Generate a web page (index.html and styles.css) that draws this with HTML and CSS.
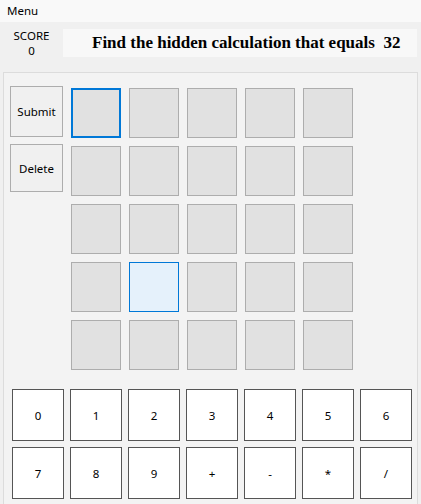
FILE: index.html
```html
<!DOCTYPE html>
<html>
<head>
<meta charset="utf-8">
<link rel="stylesheet" href="styles.css">
</head>
<body>
<div class="menubar"><span class="menu-item">Menu</span></div>
<div class="header">
  <div class="score">
    <div class="score-label">SCORE</div>
    <div class="score-value">0</div>
  </div>
  <div class="title">Find the hidden calculation that equals&nbsp; 32</div>
</div>
<div class="panel">
  <div class="board">
    <div class="side">
      <button class="side-btn submit">Submit</button>
      <button class="side-btn delete">Delete</button>
    </div>
    <div class="grid">
      <div class="cell selected"></div><div class="cell"></div><div class="cell"></div><div class="cell"></div><div class="cell"></div>
      <div class="cell"></div><div class="cell"></div><div class="cell"></div><div class="cell"></div><div class="cell"></div>
      <div class="cell"></div><div class="cell"></div><div class="cell"></div><div class="cell"></div><div class="cell"></div>
      <div class="cell"></div><div class="cell hover"></div><div class="cell"></div><div class="cell"></div><div class="cell"></div>
      <div class="cell"></div><div class="cell"></div><div class="cell"></div><div class="cell"></div><div class="cell"></div>
    </div>
  </div>
  <div class="keypad">
    <button class="key">0</button><button class="key">1</button><button class="key">2</button><button class="key">3</button><button class="key">4</button><button class="key">5</button><button class="key">6</button>
    <button class="key">7</button><button class="key">8</button><button class="key">9</button><button class="key">+</button><button class="key">-</button><button class="key">*</button><button class="key">/</button>
  </div>
</div>
</body>
</html>
```
FILE: styles.css
```css
* { box-sizing: border-box; }
html, body { height: 100%; }
body {
  margin: 0;
  background: #f0f0f0;
  font-family: "Noto Sans", "Open Sans", sans-serif;
  font-size: 11.5px;
  color: #000;
  overflow: hidden;
  display: flex;
  flex-direction: column;
}
.menubar {
  flex: none;
  height: 22px;
  background: #f9f9f9;
  padding-left: 7px;
  line-height: 22px;
}
.header {
  flex: none;
  display: flex;
  margin-top: 7px;
  height: 28px;
  padding-right: 4px;
}
.score {
  width: 63px;
  text-align: center;
  font-size: 11.5px;
  line-height: 15px;
  margin-top: -1px;
}
.score-label, .score-value { height: 15px; line-height: 15px; }
.title {
  flex: 1;
  background: #f8f8f8;
  padding-left: 29px;
  font-family: "Liberation Serif", serif;
  font-weight: bold;
  font-size: 17px;
  line-height: 28px;
  white-space: nowrap;
}
.panel {
  flex: 1;
  margin: 15px 3px 0 3px;
  border: 1px solid #dcdcdc;
  border-bottom: none;
  background: #f3f3f3;
  padding: 13px 0 0 8px;
}
.board {
  display: flex;
  align-items: flex-start;
  gap: 8px;
}
.side {
  display: flex;
  flex-direction: column;
  gap: 7px;
  margin-left: -2px;
}
.side-btn {
  width: 53px;
  height: 51px;
  border: 1px solid #adadad;
  background: #f0f0f0;
  font-family: inherit;
  font-size: 11.5px;
  padding: 0;
  color: #000;
}
.delete { height: 48px; }
.grid {
  margin-top: 2px;
  display: grid;
  grid-template-columns: repeat(5, 50px);
  grid-auto-rows: 50px;
  gap: 8px;
}
.cell {
  background: #e1e1e1;
  border: 1px solid #adadad;
}
.cell.selected {
  border: 2px solid #0078d7;
}
.cell.hover {
  background: #e5f1fb;
  border-color: #0078d7;
}
.keypad {
  margin-top: 19px;
  display: grid;
  grid-template-columns: repeat(7, 52px);
  grid-auto-rows: 52px;
  gap: 6px;
}
.key {
  border: 1px solid #555;
  background: #fff;
  font-family: inherit;
  font-size: 11.5px;
  padding: 0;
  color: #000;
}
```
